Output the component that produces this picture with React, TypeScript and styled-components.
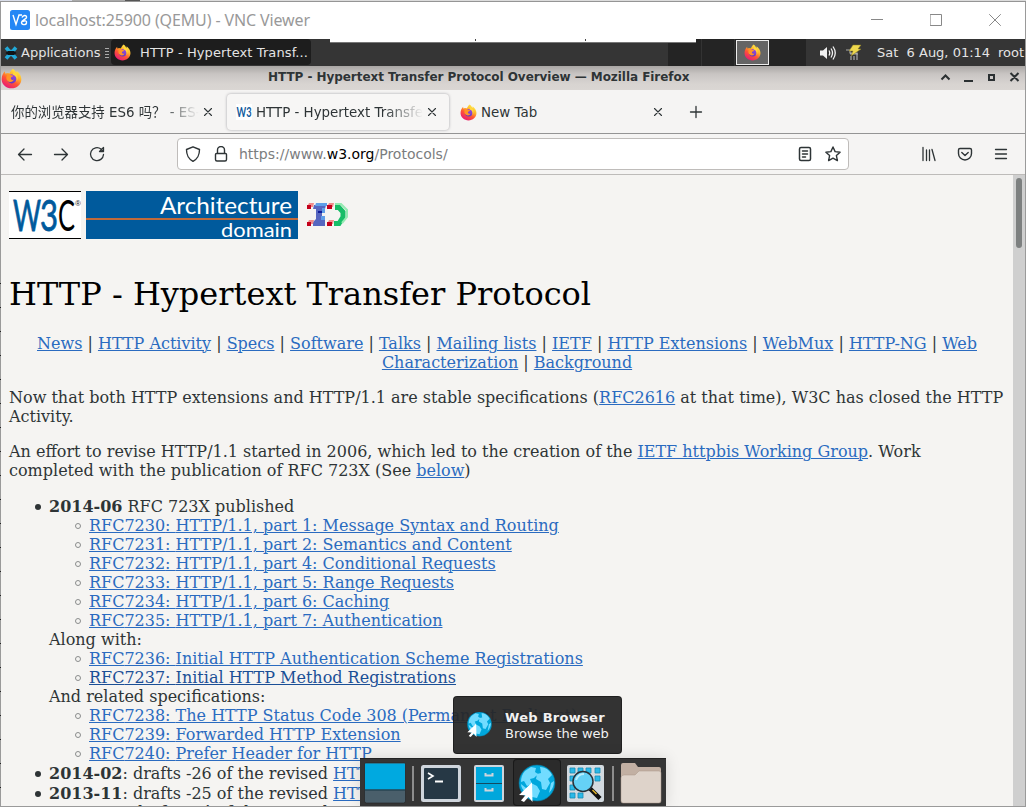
import React from 'react';
import styled, { createGlobalStyle, css } from 'styled-components';

const GlobalStyle = createGlobalStyle`
  *, *::before { box-sizing: border-box; }
  body { margin: 0; overflow: hidden; }
  svg { display: block; flex: none; }
`;

const sans = css`font-family: "DejaVu Sans", "Noto Sans CJK SC", sans-serif;`;

const Desktop = styled.div`
  position: relative;
  width: 1026px;
  height: 807px;
  overflow: hidden;
  display: flex;
  flex-direction: column;
  background: #f5f4f2;
  ${sans}
`;
const BackdropStrip = styled.div`
  height: 2px;
  flex: none;
  border-bottom: 1px solid #959595;
  background: linear-gradient(90deg, #d8dce8 0 72px, #aaa 72px 125px, #555 125px 140px, #dcdcdc 140px);
`;
const Frame = styled.div`
  flex: 1;
  min-height: 0;
  display: flex;
  flex-direction: column;
  border: solid #9a9a9a;
  border-width: 0 1px 1px 1px;
`;
const EdgeTicks = styled.div`
  position: absolute;
  left: 0;
  top: 283px;
  width: 1px;
  height: 520px;
  background: repeating-linear-gradient(180deg, #222 0 1px, transparent 1px 24px);
`;

const ViewerBar = styled.div`
  height: 37px;
  flex: none;
  background: #fff;
  display: flex;
  align-items: center;
  padding: 0 0 1px 9px;
`;
const ViewerTitle = styled.div`
  flex: 1;
  margin-left: 5px;
  font: 16px/22px "Noto Sans", sans-serif;
  letter-spacing: -0.12px;
  color: #999;
  white-space: pre;
`;
const ViewerControls = styled.div`
  display: flex;
  gap: 47px;
  padding-right: 24px;
`;

const Panel = styled.div`
  height: 27px;
  flex: none;
  display: flex;
  background: #353535;
  color: #e4e4e4;
  font-size: 13px;
  line-height: 27px;
  white-space: pre;
`;
const AppMenu = styled.div`
  width: 110px;
  display: flex;
  align-items: center;
  padding-left: 3px;
`;
const AppLabel = styled.span`
  margin-left: 3px;
  width: 84px;
`;
const TaskButton = styled.div`
  width: 200px;
  margin-bottom: 2px;
  height: 26px;
  border-radius: 4px;
  background: #1d1d1d;
  display: flex;
  align-items: center;
  padding-left: 3px;
`;
const TaskLabel = styled.span`
  margin-left: 9px;
  letter-spacing: 0.1px;
`;
const Pager = styled.div`
  margin-left: auto;
  width: 138px;
  display: flex;
  background: #242424;
`;
const PagerCell = styled.div<{ $w: number }>`
  width: ${p => p.$w}px;
  border-right: 1px solid #333;
`;
const PagerActive = styled.div`
  width: 33px;
  height: 25px;
  margin: 1px 0 0 1px;
  border: 1px solid #eee;
  background: #656565;
  display: flex;
  align-items: center;
  justify-content: center;
`;
const Tray = styled.div`
  width: 219px;
  display: flex;
  align-items: center;
  padding-left: 13px;
`;
const Clock = styled.span`
  margin-left: 14px;
  width: 121px;
`;
const TopNotch = styled.div`
  position: absolute;
  left: 330px;
  top: 39px;
  width: 366px;
  height: 4px;
  background: #fff;
  border-bottom: 1px solid #777;
  display: flex;
  padding-left: 145px;
  gap: 109px;
`;
const NotchMark = styled.div`
  width: 1px;
  height: 2px;
  background: #444;
`;

const BrowserTitle = styled.div`
  height: 24px;
  flex: none;
  display: flex;
  align-items: center;
  background: linear-gradient(180deg, #a9a6a4 0, #c9c5c3 8px, #d8d4d1 18px, #dad6d3 24px);
  color: #2e3436;
`;
const BrowserCaption = styled.div`
  margin-left: 246px;
  flex: 1;
  font-size: 12px;
  font-weight: bold;
  line-height: 22px;
  letter-spacing: -0.05px;
  padding-bottom: 3px;
  white-space: pre;
`;
const CaptionButtons = styled.div`
  width: 88px;
  padding-bottom: 3px;
`;

const TabStrip = styled.div`
  height: 44px;
  flex: none;
  display: flex;
  padding: 4px 0 0 1px;
  background: #f5f4f3;
  border-bottom: 1px solid #949494;
`;
const Tab = styled.div<{ $w: number; $active?: boolean }>`
  width: ${p => p.$w}px;
  height: 36px;
  padding: 0 12px 0 9px;
  margin-right: 2px;
  display: flex;
  align-items: center;
  gap: 4px;
  border-radius: 4px;
  ${p => p.$active && css`box-shadow: 0 0 3px #a3a2a6; background: #f7f6f5;`}
`;
const TabLabel = styled.div<{ $fade?: boolean }>`
  flex: 1;
  min-width: 0;
  overflow: hidden;
  padding-top: 2px;
  white-space: pre;
  font: 13.4px/24px "DejaVu Sans", "Noto Sans CJK SC", sans-serif;
  color: #2e3436;
  ${p => p.$fade && css`mask-image: linear-gradient(90deg, #000 calc(100% - 38px), transparent);`}
`;
const NewTab = styled.div`
  padding: 11px 0 0 12px;
`;

const Toolbar = styled.div`
  height: 41px;
  flex: none;
  display: flex;
  align-items: center;
  padding: 0 16px;
  background: #f5f4f3;
  border-bottom: 1px solid #bdbbb9;
`;
const IconGroup = styled.div<{ $gap: number }>`
  display: flex;
  gap: ${p => p.$gap}px;
`;
const UrlBar = styled.div`
  width: 672px;
  height: 32px;
  margin: 0 72px;
  padding: 0 7px;
  display: flex;
  align-items: center;
  background: #fff;
  border: 1px solid #bfbcba;
  border-radius: 4px;
`;
const UrlText = styled.div`
  flex: 1;
  margin-left: 10px;
  font: 14px/24px "DejaVu Sans", sans-serif;
  color: #7b7d7e;
  b { font-weight: normal; color: #000; }
`;

const Viewport = styled.div`
  flex: 1;
  min-height: 0;
  display: flex;
  overflow: hidden;
`;
const Page = styled.main`
  flex: 1;
  padding: 16px 8px 0;
  overflow: hidden;
  font: 16px/19px "DejaVu Serif", serif;
  color: #2e3436;
  white-space: pre;
`;
const ScrollTrack = styled.div`
  width: 12px;
  padding: 3px;
  background: #cfcfcf;
`;
const ScrollThumb = styled.div`
  height: 70px;
  border-radius: 3px;
  background: #7d8080;
`;
const Logos = styled.div`
  display: flex;
  height: 48px;
`;
const Heading = styled.h1`
  margin: 36px 0 20px;
  font-size: 32px;
  line-height: 39px;
  font-weight: normal;
  color: #000;
`;
const Nav = styled.div`
  text-align: center;
`;
const Para = styled.p`
  margin: 16px 0 0;
`;
const Link = styled.a<{ $hot?: boolean }>`
  color: ${p => (p.$hot ? '#1b4f96' : '#2a6bc0')};
  text-decoration: underline;
  text-decoration-thickness: 1px;
  text-underline-offset: 1px;
`;
const List = styled.ul`
  list-style: none;
  margin: 17px 0 0;
  padding: 0 0 0 40px;
`;
const marker = css`
  content: "";
  display: inline-block;
  width: 6px;
  height: 6px;
  border-radius: 50%;
`;
const Item = styled.li<{ $tall?: boolean }>`
  ${p => p.$tall && css`padding-top: 1px;`}
  &::before {
    ${marker}
    margin: 0 8px 2px -14px;
    background: #2e3436;
  }
`;
const SubList = styled.ul`
  list-style: none;
  margin: 0;
  padding: 0 0 0 40px;
`;
const SubItem = styled.li`
  height: 19px;
  &::before {
    ${marker}
    margin: 0 8px 2px -14px;
    border: 1px solid #8b8d8d;
  }
`;

const Dock = styled.div`
  position: absolute;
  left: 360px;
  top: 758px;
  width: 306px;
  height: 48px;
  padding: 0 1px;
  display: flex;
  background: #353535;
  border-top: 1px solid #222;
  box-shadow: 0 0 14px rgba(0, 0, 0, 0.13);
`;
const DockCell = styled.div<{ $active?: boolean }>`
  width: 48px;
  height: 47px;
  border-radius: 4px;
  ${p => p.$active && css`background: #2b2b2b; box-shadow: inset 0 0 0 1px #191919;`}
`;
const DockDivider = styled.div`
  width: 2px;
  height: 35px;
  margin: 7px 3px;
  background: #8d8d8d;
`;
const Tooltip = styled.div`
  position: absolute;
  left: 453px;
  top: 696px;
  width: 169px;
  height: 58px;
  padding: 1px 0 0 12px;
  border-radius: 4px;
  border: 1px solid rgba(20, 20, 20, 0.6);
  background: rgba(38, 38, 38, 0.94);
  display: flex;
  align-items: center;
  gap: 12px;
  color: #f2f2f2;
  font-size: 13px;
  line-height: 16px;
  white-space: pre;
  b { letter-spacing: 0.28px; }
`;

const Firefox = ({ size, id }: { size: number; id: string }) => (
  <svg width={size} height={size} viewBox="0 0 32 32">
    <defs>
      <linearGradient id={`${id}a`} x1="0.8" y1="0.05" x2="0.25" y2="0.95">
        <stop offset="0" stopColor="#fff14a" />
        <stop offset="0.35" stopColor="#ffb02a" />
        <stop offset="0.62" stopColor="#ff5634" />
        <stop offset="1" stopColor="#e81b74" />
      </linearGradient>
      <linearGradient id={`${id}b`} x1="0.7" y1="0" x2="0.3" y2="1">
        <stop offset="0" stopColor="#a04be0" />
        <stop offset="1" stopColor="#5838c0" />
      </linearGradient>
    </defs>
    <path fill={`url(#${id}a)`} d="M18 1c3 2 4 4 5 6 1-.5 1-2 .6-3C28 7 31 12 31 17c0 8-7 14-15 14S1 25 1 17c0-5 2-9 5-12 0 2 .3 3 1 4 2-1 4-1 6-.6C14 5 16 3 18 1z" />
    <circle cx="16.5" cy="16.5" r="7" fill={`url(#${id}b)`} />
    <path fill="#ff9426" d="M6 9c4-1.500 8 0 9 2l4 .6c-.4 2-3.600 2.400-4 3.400-.4 2.600 2 4 4.600 2.700-1 3.500-4.500 4.500-7.500 3.200C8 19 7 14 9.500 11z" />
    <path fill="#ffd83d" d="M19 5c7 3 8 11 4.500 16 2-7-2-9-5.500-11 1-1.500 1.300-3 1-5z" />
  </svg>
);

const Line = ({ d, size = 16, w = 1.3, color = '#2e3436' }: { d: string; size?: number; w?: number; color?: string }) => (
  <svg width={size} height={size} viewBox={`0 0 ${size} ${size}`} fill="none" stroke={color} strokeWidth={w} strokeLinecap="round" strokeLinejoin="round">
    <path d={d} />
  </svg>
);
const CLOSE = 'M1.500 1.500l7 7M8.500 1.500l-7 7';

const Globe = () => (
  <>
    <circle cx="24" cy="24" r="18" fill="#00a7dc" stroke="#0d6c8c" strokeWidth=".6" />
    <path fill="#72dcff" d="M12 12l6-4 5 1-1 4 3 2-4 4-4 1 2 5-5 2-3-5-3 1c0-4 1-8 4-11zM27 8c6 0 10 4 12 8l-4 4 2 4-4 7-4-1-1-7-5-3 1-5 4-1zM38 24l3-2c0 5-2 9-5 12zM18 24l6 3 3 5-3 7-5-1-2-7zM8 25l5 4-1 4c-2-2-4-5-4-8z" />
    <path fill="#fff" d="M19 23.500L6 36l6.500.2-4.500 5.300 3 1.500 4.500-5 4 5z" />
  </>
);

const Rfc = ({ n, children }: { n: string; children: React.ReactNode }) => (
  <SubItem><Link $hot={n === '7237'}>RFC{n}: {children}</Link></SubItem>
);

const NAV_ONE = ['News', 'HTTP Activity', 'Specs', 'Software', 'Talks', 'Mailing lists', 'IETF', 'HTTP Extensions', 'WebMux', 'HTTP-NG'];

export default function App() {
  return (
    <Desktop>
      <GlobalStyle />
      <BackdropStrip />
      <Frame>
        <ViewerBar>
          <svg width="20" height="20" viewBox="0 0 20 20">
            <rect width="20" height="20" rx="2.500" fill="#2487f5" />
            <path d="M3 5l3 9.500L9 5H12M12 7.500c1-3 5-2.500 4.500 0-.5 2-5 2.500-5 5s4.500 3 5 .5-1.500-2.500-4-1.500" fill="none" stroke="#fff" strokeWidth="1.400" />
          </svg>
          <ViewerTitle>localhost:25900 (QEMU) - VNC Viewer</ViewerTitle>
          <ViewerControls>
            <Line size={12} w={1} color="#888" d="M0 5.500h12" />
            <Line size={12} w={1} color="#888" d="M.5.500h11v11h-11z" />
            <Line size={12} w={1} color="#888" d="M.5.500l11 11M11.500.500l-11 11" />
          </ViewerControls>
        </ViewerBar>

        <Panel>
          <AppMenu>
            <svg width="14" height="16" viewBox="0 0 14 16">
              <path d="M2 2.500L5.500 6.500h3L12 2.500M2 13.500L5.500 9.500h3L12 13.500" fill="none" stroke="#21a9d8" strokeWidth="3.600" />
              <path d="M1.500 8l2.500-2h6l2.500 2L10 10H4z" fill="#101416" />
            </svg>
            <AppLabel>Applications</AppLabel>
            <svg width="4" height="10" viewBox="0 0 4 10"><path d="M0 .5h4M0 3.500h4M0 6.500h4M0 9.500h4" stroke="#aaa" /></svg>
          </AppMenu>
          <TaskButton>
            <Firefox size={17} id="task" />
            <TaskLabel>HTTP - Hypertext Transf...</TaskLabel>
          </TaskButton>
          <Pager>
            <PagerCell $w={34} />
            <PagerCell $w={33} />
            <PagerActive><Firefox size={17} id="pager" /></PagerActive>
          </Pager>
          <Tray>
            <svg width="18" height="16" viewBox="0 0 18 16">
              <path d="M1 5.500h3L8 2v12l-4-3.500H1z" fill="#f1f1f1" />
              <path d="M10 5.500q1.500 2.500 0 5M12 3.500q3 4.500 0 9M14 1.500q4.500 6.500 0 13" fill="none" stroke="#f1f1f1" strokeWidth="1.300" />
            </svg>
            <svg width="18" height="18" viewBox="0 0 18 18" style={{ marginLeft: 8 }}>
              <path d="M1 6h4v3h7v3M6 12v4M9 12v4M12 12v4M5 10h8" fill="none" stroke="#aaa" strokeWidth="1.200" />
              <path d="M8 1h8l-3 4h3l-10 7 2-5H4z" fill="#efd94e" stroke="#8b7d26" strokeWidth=".5" />
            </svg>
            <Clock>Sat  6 Aug, 01:14</Clock>
            <span>root</span>
          </Tray>
        </Panel>

        <BrowserTitle>
          <Firefox size={21} id="title" />
          <BrowserCaption>HTTP - Hypertext Transfer Protocol Overview — Mozilla Firefox</BrowserCaption>
          <CaptionButtons>
            <svg width="88" height="14" viewBox="0 0 88 14" fill="none" stroke="#2b3032" strokeWidth="2">
              <path d="M4.500 9.500l4-4 4 4M27 11h9M52 5h5v5h-5zM73.500 3l8 8M81.500 3l-8 8" />
            </svg>
          </CaptionButtons>
        </BrowserTitle>

        <TabStrip>
          <Tab $w={223}>
            <TabLabel $fade>你的浏览器支持 ES6 吗？ - ES-Checker</TabLabel>
            <Line size={10} w={1.1} d={CLOSE} />
          </Tab>
          <Tab $w={222} $active>
            <svg width="16" height="16" viewBox="0 0 16 16">
              <rect width="16" height="16" fill="#fff" />
              <text x="0.500" y="13" fontFamily="Lato, sans-serif" fontWeight="bold" fontSize="13" textLength="15" lengthAdjust="spacingAndGlyphs" fill="#105a9c">W3</text>
            </svg>
            <TabLabel $fade>HTTP - Hypertext Transfer Protocol</TabLabel>
            <Line size={10} w={1.1} d={CLOSE} />
          </Tab>
          <Tab $w={224}>
            <Firefox size={17} id="tab" />
            <TabLabel>New Tab</TabLabel>
            <Line size={10} w={1.1} d={CLOSE} />
          </Tab>
          <NewTab><Line size={14} d="M7 1.500v11M1.500 7h11" /></NewTab>
        </TabStrip>

        <Toolbar>
          <IconGroup $gap={20}>
            <Line d="M14.500 8.500H1.500M7 3L1.500 8.500L7 14" />
            <Line d="M1.500 8.500h13M9 3l5.500 5.500L9 14" />
            <Line d="M14.500 8.500a6.500 6.500 0 1 1-2.500-5.500l2 2M14.500 1.500v4h-4z" />
          </IconGroup>
          <UrlBar>
            <IconGroup $gap={12}>
              <Line w={1.4} d="M8 .8L14.500 3.500c0 6-1.500 9-6.500 11.800C3 12.500 1.500 9.500 1.500 3.500z" />
              <Line w={1.4} d="M4.500 7V4a3.500 3.500 0 0 1 7 0v3M3.500 7.500h9q1 0 1 1v5q0 1.500-1.500 1.500H4q-1.500 0-1.500-1.500v-5q0-1 1-1z" />
            </IconGroup>
            <UrlText>https://www.<b>w3.org</b>/Protocols/</UrlText>
            <IconGroup $gap={12}>
              <Line w={1.5} d="M4 1.500h8q1.500 0 1.500 1.500v10q0 1.500-1.500 1.500H4Q2.500 14.500 2.500 13V3Q2.500 1.500 4 1.500zM5.500 5h5M5.500 8h5M5.500 11h3" />
              <Line w={1.4} d="M8 1l2.100 4.600 5 .6-3.700 3.400 1 5L8 12.100l-4.400 2.500 1-5L.9 6.200l5-.6z" />
            </IconGroup>
          </UrlBar>
          <IconGroup $gap={20}>
            <Line d="M2 1.500v13M5.500 4v10.500M8.500 4v10.500M11 3.500l3 11" />
            <Line w={1.4} d="M3 2.500h10q1.500 0 1.500 1.500v3.500a6.500 6.500 0 0 1-13 0V4q0-1.500 1.500-1.500zM4.800 6.500L8 9.500l3.200-3" />
            <Line d="M2.500 3.500h11M2.500 8h11M2.500 12.500h11" />
          </IconGroup>
        </Toolbar>

        <Viewport>
          <Page>
            <Logos>
              <svg width="72" height="48" viewBox="0 0 72 48">
                <rect width="72" height="48" fill="#fff" />
                <path d="M0 .5h72M0 47.500h72" stroke="#000" />
                <text x="4" y="40" fontFamily="Lato, sans-serif" fontSize="43" textLength="28" lengthAdjust="spacingAndGlyphs" fill="#005a9c" stroke="#005a9c" strokeWidth=".8">W</text>
                <text x="31" y="40" fontFamily="Lato, sans-serif" fontSize="43" textLength="18" lengthAdjust="spacingAndGlyphs" fill="#005a9c" stroke="#005a9c" strokeWidth=".8">3</text>
                <text x="49" y="40" fontFamily="Lato, sans-serif" fontSize="43" textLength="17" lengthAdjust="spacingAndGlyphs" fill="#000">C</text>
                <text x="66" y="15" fontFamily="Liberation Sans, sans-serif" fontSize="8" fill="#222">®</text>
              </svg>
              <svg width="212" height="48" viewBox="0 0 212 48" style={{ marginLeft: 5 }}>
                <rect width="212" height="48" fill="#005a9c" />
                <path d="M0 28h212" stroke="#c06a3b" strokeWidth="2" />
                <text x="74" y="23" fontFamily="Lato, sans-serif" fontSize="23" textLength="132" lengthAdjust="spacingAndGlyphs" fill="#fff">Architecture</text>
                <text x="135" y="46" fontFamily="Lato, sans-serif" fontSize="20" textLength="71" lengthAdjust="spacingAndGlyphs" fill="#fff">domain</text>
              </svg>
              <svg width="44" height="48" viewBox="0 0 44 48" style={{ marginLeft: 9 }}>
                <path d="M7 14h12l-1 4h-3v10h3v7H6v-4l3-3V18H6z" fill="#5666c0" />
                <path d="M9 12h11v3H8zM15 17h3v5h-3zM14 25h4v4h-4z" fill="#5f9ee8" />
                <path d="M11 20h4v2h-4z" fill="#101c98" />
                <path d="M28 16.500h4l4 4.500v5l-4 6.500h-5" fill="none" stroke="#17bd67" strokeWidth="5" />
                <path d="M28 13h6l6 6v7l-5 6" fill="none" stroke="#94eab2" strokeWidth="2" />
                <path d="M0 14h4v4H0zM0 31h4v4H0zM20 14h5v4h-5zM20 31h5v4h-5z" fill="#c4001c" />
                <path d="M2 12h5l-1 4H4v-2H1zM2 29h5l-1 4H4v-2H1zM22 12h5l-1 4h-1v-2h-4zM22 29h5l-1 4h-1v-2h-4z" fill="#f08a8a" />
              </svg>
            </Logos>
            <Heading>HTTP - Hypertext Transfer Protocol</Heading>
            <Nav>{NAV_ONE.map(n => <React.Fragment key={n}><Link>{n}</Link> | </React.Fragment>)}<Link>Web</Link></Nav>
            <Nav><Link>Characterization</Link> | <Link>Background</Link></Nav>
            <Para>
              Now that both HTTP extensions and HTTP/1.1 are stable specifications (<Link>RFC2616</Link> at that time), W3C has closed the HTTP{'\n'}Activity.
            </Para>
            <Para>
              An effort to revise HTTP/1.1 started in 2006, which led to the creation of the <Link>IETF httpbis Working Group</Link>. Work{'\n'}completed with the publication of RFC 723X (See <Link>below</Link>)
            </Para>
            <List>
              <Item>
                <b>2014-06</b> RFC 723X published
                <SubList>
                  <Rfc n="7230">HTTP/1.1, part 1: Message Syntax and Routing</Rfc>
                  <Rfc n="7231">HTTP/1.1, part 2: Semantics and Content</Rfc>
                  <Rfc n="7232">HTTP/1.1, part 4: Conditional Requests</Rfc>
                  <Rfc n="7233">HTTP/1.1, part 5: Range Requests</Rfc>
                  <Rfc n="7234">HTTP/1.1, part 6: Caching</Rfc>
                  <Rfc n="7235">HTTP/1.1, part 7: Authentication</Rfc>
                </SubList>
                Along with:
                <SubList>
                  <Rfc n="7236">Initial HTTP Authentication Scheme Registrations</Rfc>
                  <Rfc n="7237">Initial HTTP Method Registrations</Rfc>
                </SubList>
                And related specifications:
                <SubList>
                  <Rfc n="7238">The HTTP Status Code 308 (Permanent Redirect)</Rfc>
                  <Rfc n="7239">Forwarded HTTP Extension</Rfc>
                  <Rfc n="7240">Prefer Header for HTTP</Rfc>
                </SubList>
              </Item>
              <Item $tall><b>2014-02</b>: drafts -26 of the revised <Link>HTTP/1.1</Link></Item>
              <Item $tall><b>2013-11</b>: drafts -25 of the revised <Link>HTTP/1.1</Link></Item>
              <Item><b>2013-09</b>: drafts -24 of the revised <Link>HTTP/1.1</Link></Item>
            </List>
          </Page>
          <ScrollTrack><ScrollThumb /></ScrollTrack>
        </Viewport>
      </Frame>

      <EdgeTicks />
      <TopNotch><NotchMark /><NotchMark /></TopNotch>

      <Tooltip>
        <svg width="27" height="27" viewBox="4 6 40 40"><Globe /></svg>
        <div><b>Web Browser</b>{'\n'}Browse the web</div>
      </Tooltip>
      <Dock>
        <DockCell>
          <svg width="48" height="48"><rect x="3.500" y="4" width="41" height="40" rx="2" fill="#4a5f6b" stroke="#222" strokeWidth=".6" /><path d="M4 4.500h40v26H4z" fill="#00a9e0" /><path d="M4 31h40" stroke="#173947" /></svg>
        </DockCell>
        <DockDivider />
        <DockCell>
          <svg width="48" height="48"><rect x="4" y="6" width="40" height="37" rx="2.500" fill="#cfd5dc" /><rect x="7" y="9" width="34" height="31" rx="1" fill="#263845" /><path d="M11 14l5 3-5 3" fill="none" stroke="#fff" strokeWidth="1.600" /><path d="M18 22.500h8" stroke="#fff" strokeWidth="2" /></svg>
        </DockCell>
        <DockCell>
          <svg width="48" height="48"><rect x="9" y="6" width="30" height="37" rx="2" fill="#cfd5dc" /><rect x="11" y="8" width="26" height="33" fill="#00a7dc" /><path d="M11 24.500h26" stroke="#134a60" /><path d="M20.500 14v2.500h7V14M20.500 29v2.500h7V29" fill="none" stroke="#cfd5dc" strokeWidth="2" /></svg>
        </DockCell>
        <DockCell $active><svg width="48" height="48"><Globe /></svg></DockCell>
        <DockCell>
          <svg width="48" height="48">
            <rect x="6" y="6" width="37" height="37" rx="2" fill="#d3dae0" />
            <path d="M9 9h5v5H9zM17 9h5v5h-5zM25 9h5v5h-5zM34 9h5v5h-5zM9 17h5v5H9zM34 17h5v5h-5zM9 26h5v5H9zM9 34h5v5H9zM17 34h5v5h-5z" fill="#2bb9e8" stroke="#148bb4" strokeWidth=".8" />
            <path d="M29 29.500l10 10" stroke="#111" strokeWidth="4.500" /><path d="M31.500 31l4 4" stroke="#e3b62b" strokeWidth="1.500" />
            <circle cx="22" cy="22.500" r="10" fill="#65d1f6" stroke="#28323a" strokeWidth="1.500" />
            <path d="M15 21q2-6 8-6" fill="none" stroke="#b9efff" strokeWidth="2" />
          </svg>
        </DockCell>
        <DockDivider />
        <DockCell>
          <svg width="48" height="48"><path d="M4 6q0-2 2-2h12l3 4h21q2 0 2 2v14H4z" fill="#c2b0a3" /><path d="M4 19q0-3 3-3h11l4-4h20q2 0 2 2v28q0 2-2 2H6q-2 0-2-2z" fill="#ded3ca" stroke="#a89689" strokeWidth=".5" /></svg>
        </DockCell>
      </Dock>
    </Desktop>
  );
}
